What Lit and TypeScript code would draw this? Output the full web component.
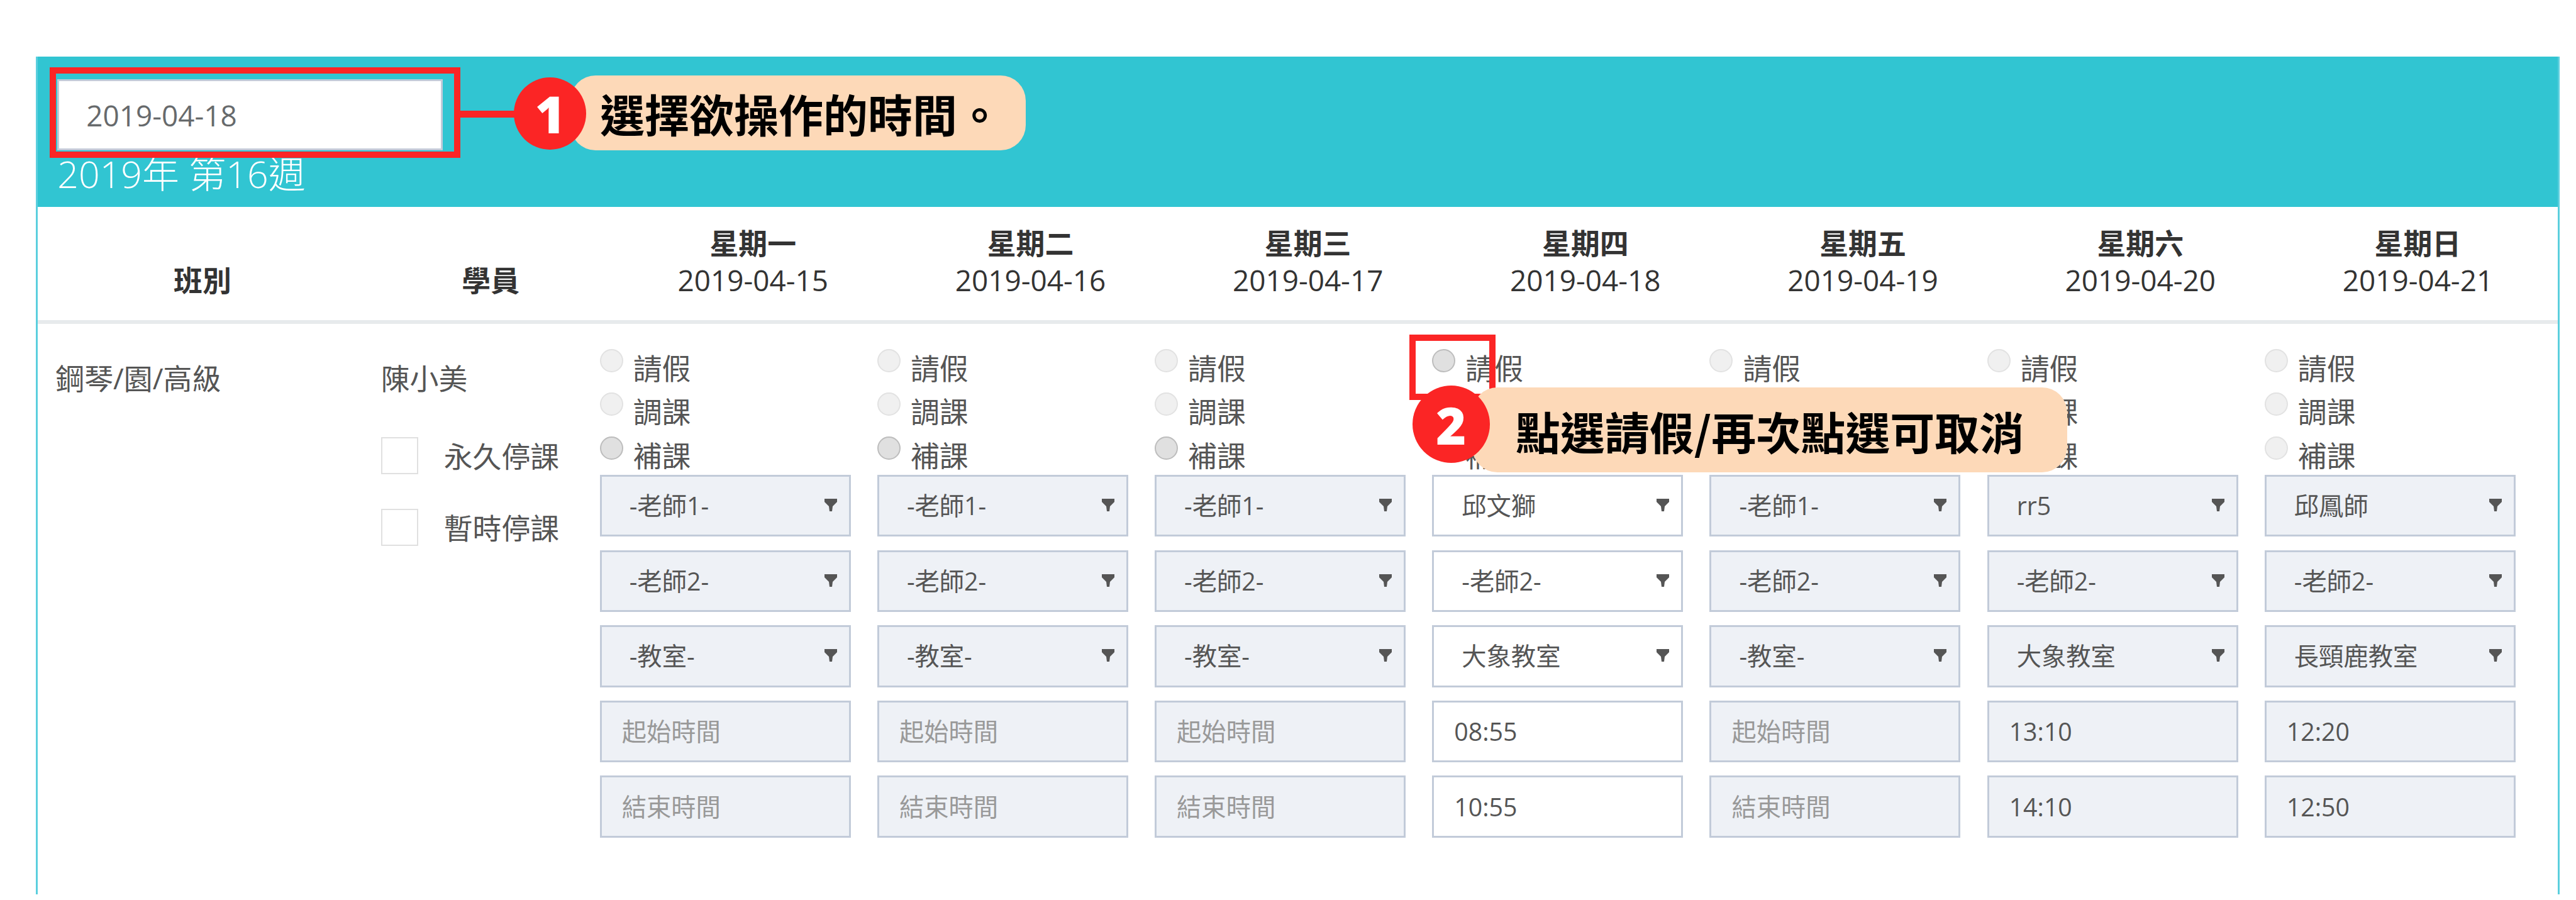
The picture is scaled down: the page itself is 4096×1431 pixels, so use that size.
import { LitElement, html, css } from 'lit';
import { customElement } from 'lit/decorators.js';

interface Day {
  name: string;
  date: string;
  active?: boolean;
  teacher1: string;
  room: string;
  start: string;
  end: string;
  dark: number; // which radio has the darker hover look, -1 for none
}

const DAYS: Day[] = [
  { name: '星期一', date: '2019-04-15', teacher1: '-老師1-', room: '-教室-', start: '', end: '', dark: 2 },
  { name: '星期二', date: '2019-04-16', teacher1: '-老師1-', room: '-教室-', start: '', end: '', dark: 2 },
  { name: '星期三', date: '2019-04-17', teacher1: '-老師1-', room: '-教室-', start: '', end: '', dark: 2 },
  { name: '星期四', date: '2019-04-18', active: true, teacher1: '邱文獅', room: '大象教室', start: '08:55', end: '10:55', dark: 0 },
  { name: '星期五', date: '2019-04-19', teacher1: '-老師1-', room: '-教室-', start: '', end: '', dark: -1 },
  { name: '星期六', date: '2019-04-20', teacher1: 'rr5', room: '大象教室', start: '13:10', end: '14:10', dark: -1 },
  { name: '星期日', date: '2019-04-21', teacher1: '邱鳳師', room: '長頸鹿教室', start: '12:20', end: '12:50', dark: -1 },
];

const LEAVE = ['請假', '調課', '補課'];

@customElement('app-root')
export class AppRoot extends LitElement {
  static styles = css`
    :host {
      display: block;
      position: relative;
      height: 1431px;
      background: #fff;
      overflow: hidden;
      font-family: 'Open Sans', 'Noto Sans CJK TC', sans-serif;
      font-size: 45.9px;
      color: #555;
    }
    .card {
      box-sizing: border-box;
      margin: 90px 0 0 57.3px;
      width: 4013px;
      height: 1332px;
      border-left: 3.3px solid #5bcfde;
      border-right: 3.3px solid #5bcfde;
    }
    .banner {
      box-sizing: border-box;
      height: 239px;
      padding: 36px 0 0 31px;
      background: #31c5d2;
      color: #fff;
    }
    .date-input {
      display: block;
      box-sizing: border-box;
      width: 613px;
      height: 113px;
      padding: 0 0 0 43px;
      border: 3.3px solid #c2cbd9;
      background: #fff;
      color: #676a6c;
      font: inherit;
      outline: none;
    }
    h2 {
      margin: 8px 0 0;
      font-size: 59px;
      font-weight: 300;
      line-height: 59px;
    }
    .head {
      display: grid;
      grid-template-columns: 523.4px 393px repeat(7, 441.2px);
      box-sizing: border-box;
      height: 186px;
      padding-bottom: 6.5px;
      border-bottom: 6.5px solid #e7eaec;
      color: #333;
      text-align: center;
      line-height: 59px;
    }
    .head > div {
      align-self: end;
      padding-bottom: 28px;
    }
    .head b {
      display: block;
      font-weight: 600;
    }
    .body {
      display: grid;
      grid-template-columns: 545.4px 348px repeat(7, 441.2px);
    }
    .class-cell {
      padding: 56px 0 0 27.9px;
      line-height: 60px;
    }
    .student {
      padding-top: 56px;
      line-height: 60px;
    }
    .stop {
      display: flex;
      flex-direction: column;
      gap: 54px;
      margin-top: 63.5px;
    }
    .stop label {
      display: flex;
      align-items: center;
      gap: 41px;
    }
    .stop input {
      appearance: none;
      box-sizing: border-box;
      width: 59px;
      height: 59px;
      margin: 0;
      border: 2.5px solid #e0e0e0;
      background: #fff;
    }
    .day {
      display: flex;
      flex-direction: column;
      gap: 21.3px;
      width: 398.9px;
      padding-top: 39.5px;
    }
    .radios {
      display: flex;
      flex-direction: column;
      gap: 9.6px;
      margin-bottom: -19.9px;
    }
    .radios label {
      display: flex;
      gap: 16px;
      height: 60px;
      line-height: 60px;
    }
    .radios input {
      appearance: none;
      box-sizing: border-box;
      flex: none;
      width: 37px;
      height: 37px;
      margin: 0;
      border: 2.5px solid #e2e2e2;
      border-radius: 50%;
      background: #f0f0f0;
    }
    .radios input.dark {
      border-color: #bdbdbd;
      background: #e0e0e0;
    }
    .field {
      position: relative;
      height: 98.3px;
    }
    .field select,
    .field input {
      display: block;
      box-sizing: border-box;
      width: 100%;
      height: 100%;
      margin: 0;
      border: 3.3px solid #c2cbd9;
      border-radius: 0;
      background: #eef1f6;
      color: #555;
      font: inherit;
      font-size: 39.3px;
      outline: none;
      appearance: none;
    }
    .field select {
      padding: 0 0 0 44px;
    }
    .field input {
      padding: 0 0 0 32px;
    }
    .field input::placeholder {
      color: #999;
      opacity: 1;
    }
    .active select,
    .active input {
      background: #fff;
    }
    .arrow {
      position: absolute;
      top: 38px;
      right: 22px;
      width: 20px;
      height: 20px;
      fill: #555;
    }
    .mark {
      position: absolute;
      box-sizing: border-box;
      border: 10px solid #fb2525;
    }
    .mark.date {
      left: 79.4px;
      top: 107.3px;
      width: 652.7px;
      height: 143.3px;
    }
    .mark.radio {
      left: 2240.8px;
      top: 531.5px;
      width: 136.8px;
      height: 104px;
    }
    .link {
      position: absolute;
      left: 732px;
      top: 176px;
      width: 90px;
      height: 10.6px;
      background: #fb2525;
    }
    .pill {
      position: absolute;
      display: flex;
      align-items: center;
      box-sizing: border-box;
      border-radius: 40px;
      background: #fdd9b8;
      color: #000;
      font-family: 'Noto Sans CJK TC', sans-serif;
      font-size: 71px;
      font-weight: 700;
      white-space: nowrap;
    }
    .pill.one {
      left: 907.4px;
      top: 119.6px;
      width: 724px;
      height: 119px;
      padding-left: 46.7px;
    }
    .pill.two {
      left: 2340.7px;
      top: 616px;
      width: 946px;
      height: 135px;
      padding-left: 69px;
    }
    .num {
      position: absolute;
      display: flex;
      align-items: center;
      justify-content: center;
      border-radius: 50%;
      background: #fb2525;
      color: #fff;
      font-size: 82px;
      font-weight: 800;
    }
    .num.one {
      left: 817.4px;
      top: 122.9px;
      width: 115px;
      height: 115px;
    }
    .num.two {
      left: 2245.7px;
      top: 613.4px;
      width: 123px;
      height: 123px;
    }
  `;

  renderField(value: string, placeholder: string) {
    return html`<div class="field">
      <input type="text" .value=${value} placeholder=${placeholder} />
    </div>`;
  }

  renderSelect(value: string) {
    return html`<div class="field">
      <select><option>${value}</option></select>
      <svg class="arrow" viewBox="0 0 20 20"><path d="M0 0H20V5L13 12L12 20H8L7 12L0 5Z" /></svg>
    </div>`;
  }

  renderDay(day: Day) {
    return html`<div class="day ${day.active ? 'active' : ''}">
      <div class="radios">
        ${LEAVE.map(
          (text, i) => html`<label>
            <input type="radio" class=${day.dark === i ? 'dark' : ''} />${text}
          </label>`
        )}
      </div>
      ${this.renderSelect(day.teacher1)}
      ${this.renderSelect('-老師2-')}
      ${this.renderSelect(day.room)}
      ${this.renderField(day.start, '起始時間')}
      ${this.renderField(day.end, '結束時間')}
    </div>`;
  }

  render() {
    return html`
      <div class="card">
        <div class="banner">
          <input class="date-input" type="text" value="2019-04-18" />
          <h2>2019年 第16週</h2>
        </div>
        <div class="head">
          <div><b>班別</b></div>
          <div><b>學員</b></div>
          ${DAYS.map(d => html`<div><b>${d.name}</b>${d.date}</div>`)}
        </div>
        <div class="body">
          <div class="class-cell">鋼琴/園/高級</div>
          <div class="student">
            陳小美
            <div class="stop">
              <label><input type="checkbox" />永久停課</label>
              <label><input type="checkbox" />暫時停課</label>
            </div>
          </div>
          ${DAYS.map(d => this.renderDay(d))}
        </div>
      </div>

      <div class="mark date"></div>
      <div class="link"></div>
      <div class="pill one">選擇欲操作的時間。</div>
      <div class="num one">1</div>

      <div class="mark radio"></div>
      <div class="pill two">點選請假/再次點選可取消</div>
      <div class="num two">2</div>
    `;
  }
}
